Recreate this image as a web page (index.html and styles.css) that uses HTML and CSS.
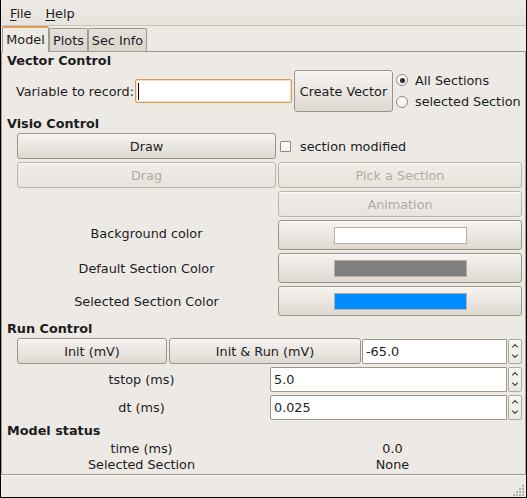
FILE: index.html
```html
<!DOCTYPE html>
<html>
<head>
<meta charset="utf-8">
<link rel="stylesheet" href="styles.css">
</head>
<body>
<div class="window">
  <div class="menubar">
    <span class="menu"><u>F</u>ile</span>
    <span class="menu"><u>H</u>elp</span>
  </div>
  <div class="tabs">
    <div class="tab active tab-model">Model</div>
    <div class="tab tab-plots">Plots</div>
    <div class="tab tab-sec">Sec Info</div>
  </div>
  <div class="page">
    <div class="heading">Vector Control</div>
    <div class="vector-row">
      <span class="var-label">Variable to record:</span>
      <div class="entry focused"><span class="cursor"></span></div>
      <button class="btn create">Create Vector</button>
      <div class="radios">
        <div class="radio"><span class="radio-dot checked"></span>All Sections</div>
        <div class="radio"><span class="radio-dot"></span>selected Section</div>
      </div>
    </div>

    <div class="heading h-visio">Visio Control</div>
    <div class="visio">
      <button class="btn">Draw</button>
      <div class="check"><span class="box"></span>section modified</div>
      <button class="btn disabled">Drag</button>
      <button class="btn disabled">Pick a Section</button>
      <span></span>
      <button class="btn disabled">Animation</button>
      <span class="cell-label up">Background color</span>
      <button class="btn color"><span class="swatch sw-white"></span></button>
      <span class="cell-label">Default Section Color</span>
      <button class="btn color"><span class="swatch sw-gray"></span></button>
      <span class="cell-label">Selected Section Color</span>
      <button class="btn color"><span class="swatch sw-blue"></span></button>
    </div>

    <div class="heading h-run">Run Control</div>
    <div class="run">
      <div class="run-row first">
        <button class="btn init">Init (mV)</button>
        <button class="btn initrun">Init &amp; Run (mV)</button>
        <div class="spin">
          <div class="spin-entry">-65.0</div>
          <div class="spin-arrows"><svg width="13" height="23" viewBox="0 0 13 23"><polyline points="3.5,7 6.5,4 9.5,7" fill="none" stroke="#3a3a3a" stroke-width="1.2"/><polyline points="3.5,15 6.5,18 9.5,15" fill="none" stroke="#3a3a3a" stroke-width="1.2"/></svg></div>
        </div>
      </div>
      <div class="run-row">
        <span class="run-label">tstop (ms)</span>
        <div class="spin">
          <div class="spin-entry">5.0</div>
          <div class="spin-arrows"><svg width="13" height="23" viewBox="0 0 13 23"><polyline points="3.5,7 6.5,4 9.5,7" fill="none" stroke="#3a3a3a" stroke-width="1.2"/><polyline points="3.5,15 6.5,18 9.5,15" fill="none" stroke="#3a3a3a" stroke-width="1.2"/></svg></div>
        </div>
      </div>
      <div class="run-row">
        <span class="run-label">dt (ms)</span>
        <div class="spin">
          <div class="spin-entry">0.025</div>
          <div class="spin-arrows"><svg width="13" height="23" viewBox="0 0 13 23"><polyline points="3.5,7 6.5,4 9.5,7" fill="none" stroke="#3a3a3a" stroke-width="1.2"/><polyline points="3.5,15 6.5,18 9.5,15" fill="none" stroke="#3a3a3a" stroke-width="1.2"/></svg></div>
        </div>
      </div>
    </div>

    <div class="heading h-status">Model status</div>
    <div class="status">
      <span>time (ms)</span><span>0.0</span>
      <span>Selected Section</span><span>None</span>
    </div>
  </div>
  <div class="statusbar">
    <svg class="grip" width="12" height="12" viewBox="0 0 12 12">
      <rect x="9" y="1" width="2" height="2" fill="#b8b0a5"/>
      <rect x="6" y="4" width="2" height="2" fill="#b8b0a5"/>
      <rect x="9" y="4" width="2" height="2" fill="#b8b0a5"/>
      <rect x="3" y="7" width="2" height="2" fill="#b8b0a5"/>
      <rect x="6" y="7" width="2" height="2" fill="#b8b0a5"/>
      <rect x="9" y="7" width="2" height="2" fill="#b8b0a5"/>
      <rect x="0" y="10" width="2" height="2" fill="#b8b0a5"/>
      <rect x="3" y="10" width="2" height="2" fill="#b8b0a5"/>
      <rect x="6" y="10" width="2" height="2" fill="#b8b0a5"/>
      <rect x="9" y="10" width="2" height="2" fill="#b8b0a5"/>
    </svg>
  </div>
</div>
</body>
</html>
```

FILE: styles.css
```css
* { box-sizing: border-box; }
html, body { margin: 0; padding: 0; }
body {
  width: 527px;
  height: 498px;
  overflow: hidden;
  background: #edeae6;
  font-family: "DejaVu Sans", "Liberation Sans", sans-serif;
  font-size: 12.8px;
  color: #1c1c1c;
}
.window {
  width: 527px;
  height: 498px;
  display: flex;
  flex-direction: column;
  background: #edeae6;
  border-left: 1px solid #000;
  border-right: 1px solid #000;
  border-bottom: 1px solid #000;
}
.menubar {
  flex: none;
  height: 26px;
  display: flex;
  align-items: center;
  gap: 14px;
  padding: 1px 0 0 9px;
  background: linear-gradient(#eeebe7, #e7e3dd);
  border-bottom: 1px solid #c8c1b7;
}
.menu u { text-decoration: underline; text-underline-offset: 2px; }

.tabs {
  flex: none;
  height: 25px;
  display: flex;
  align-items: flex-end;
  padding-left: 1px;
}
.tab {
  height: 23px;
  display: flex;
  align-items: center;
  justify-content: center;
  border: 1px solid #a39b90;
  border-bottom: none;
  border-radius: 2px 2px 0 0;
  background: linear-gradient(#e5e1db, #dad5cd);
  white-space: nowrap;
}
.tab.active {
  position: relative;
  z-index: 1;
  height: 26px;
  margin-bottom: -1px;
  padding-bottom: 1px;
  background: #edeae6;
  border-top: 2px solid #e29b52;
}
.tab-model { width: 47px; }
.tab-plots { width: 39px; }
.tab-sec { width: 59px; }

.page {
  flex: none;
  height: 424px;
  border: 1px solid #a39b90;
  padding: 0 3px 0 5px;
}
.heading {
  height: 17px;
  line-height: 17px;
  font-weight: bold;
}
.h-visio { margin-top: 3px; }
.h-run { margin-top: 4px; }
.h-status { margin-top: 2px; }

.btn {
  font: inherit;
  color: #1c1c1c;
  margin: 0;
  padding: 0;
  border: 1px solid #9d9489;
  border-radius: 3px;
  background: linear-gradient(#f6f4f1, #e9e5e0 55%, #ddd8d1);
  box-shadow: inset 0 1px 0 #fbfaf8;
  display: flex;
  align-items: center;
  justify-content: center;
  white-space: nowrap;
}
.btn.disabled {
  color: #b2aba1;
  border-color: #bdb5aa;
  background: linear-gradient(#f1eeea, #e7e3de);
}

.vector-row {
  margin-top: 1px;
  height: 42px;
  display: flex;
  align-items: center;
  padding-left: 9px;
}
.var-label { width: 119px; white-space: nowrap; }
.entry {
  width: 157px;
  height: 24px;
  background: #fff;
  border: 1px solid #d99a55;
  border-radius: 2px;
  box-shadow: inset 0 0 0 1px #f6dcc0;
  display: flex;
  align-items: center;
  padding-left: 2px;
}
.cursor { width: 1px; height: 17px; background: #000; }
.create {
  width: 99px;
  height: 42px;
  margin-left: 2px;
}
.radios {
  margin-left: 3px;
  display: flex;
  flex-direction: column;
}
.radio {
  height: 21px;
  display: flex;
  align-items: center;
  gap: 7px;
  white-space: nowrap;
}
.radio:first-child { padding-bottom: 1px; }
.radio-dot {
  width: 12px;
  height: 12px;
  border-radius: 50%;
  border: 1px solid #8f877c;
  background: linear-gradient(#fff, #f3f1ee);
  display: flex;
  align-items: center;
  justify-content: center;
}
.radio-dot.checked::after {
  content: "";
  width: 5px;
  height: 5px;
  border-radius: 50%;
  background: #2b2b2b;
}

.visio {
  margin-top: 1px;
  margin-left: 10px;
  display: grid;
  grid-template-columns: 259px 244px;
  grid-template-rows: 26px 26px 26px 30px 30px 30px;
  column-gap: 2px;
  row-gap: 3px;
}
.check {
  display: flex;
  align-items: center;
  gap: 9px;
  padding-left: 2px;
}
.box {
  width: 11px;
  height: 11px;
  border: 1px solid #8f877c;
  border-radius: 1px;
  background: linear-gradient(#fff, #f3f1ee);
}
.cell-label {
  display: flex;
  align-items: center;
  justify-content: center;
  white-space: nowrap;
}
.cell-label.up { padding-bottom: 3px; }
.swatch {
  width: 133px;
  height: 17px;
  border: 1px solid #b9b0a3;
}
.sw-white { background: #ffffff; }
.sw-gray { background: #808080; }
.sw-blue { background: #008cff; }

.run { margin-top: 1px; margin-left: 10px; width: 505px; }
.run-row {
  height: 25px;
  margin-top: 3px;
  display: flex;
  align-items: center;
}
.run-row.first { height: 26px; margin-top: 0; }
.init { width: 150px; height: 26px; }
.initrun { width: 192px; height: 26px; margin-left: 2px; }
.run-row.first .spin { margin-left: 1px; }
.run-label { width: 249px; margin-right: 4px; text-align: center; white-space: nowrap; }
.spin {
  flex: 1;
  height: 25px;
  display: flex;
}
.spin-entry {
  flex: 1;
  background: #fff;
  border: 1px solid #a0978b;
  border-radius: 2px 0 0 2px;
  padding-left: 3px;
  display: flex;
  align-items: center;
}
.spin-arrows {
  width: 14px;
  margin-left: 1px;
  border: 1px solid #b3aa9e;
  border-radius: 2px;
  background: linear-gradient(#f8f6f4, #ebe7e2);
  display: flex;
  align-items: center;
  justify-content: center;
}

.status {
  margin-top: 2px;
  margin-left: 10px;
  display: grid;
  grid-template-columns: 249px 245px;
  column-gap: 4px;
  grid-auto-rows: 16px;
  line-height: 16px;
  text-align: center;
  white-space: nowrap;
}

.statusbar {
  flex: 1;
  display: flex;
  justify-content: flex-end;
  align-items: flex-end;
  padding: 0 1px 1px 0;
  border-top: 1px solid #faf9f7;
}
```
